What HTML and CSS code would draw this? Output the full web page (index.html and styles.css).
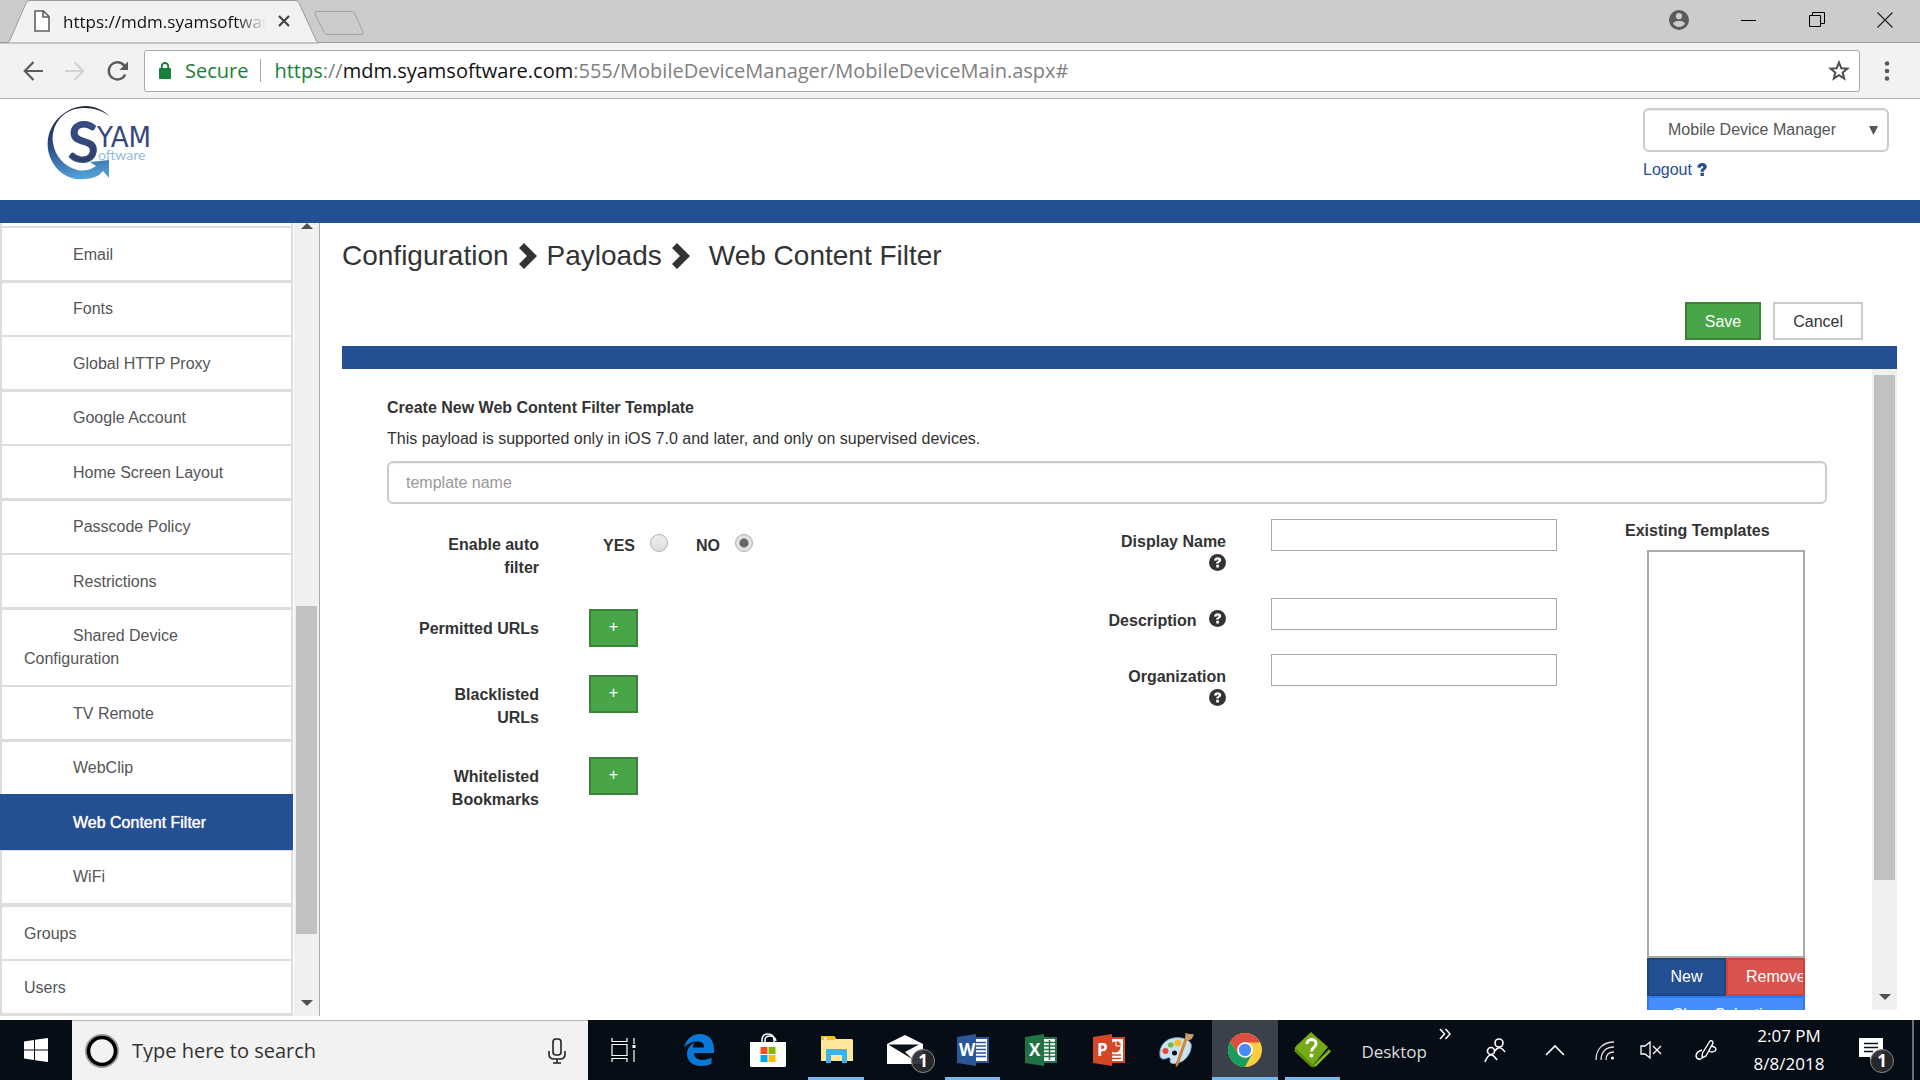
FILE: index.html
```html
<!DOCTYPE html>
<html lang="en">
<head>
<meta charset="utf-8">
<title>Mobile Device Manager - Web Content Filter</title>
<link rel="stylesheet" href="styles.css">
</head>
<body>
<svg width="0" height="0" class="sprite" aria-hidden="true">
  <symbol id="chevron" viewBox="0 0 18 26"><path d="M5 0 18 13 5 26 0 21 8 13 0 5z"/></symbol>
  <symbol id="help" viewBox="0 0 17 17"><circle cx="8.500" cy="8.500" r="8.500"/><path d="M5 6.500C5.200 4 6.800 3.300 8.700 3.300c2 0 3.500 1 3.500 2.700 0 2.200-2.400 2-2.400 3.600H7.200c0-2.300 2.300-2 2.300-3.300 0-1.100-1.900-1-2 .5zM7.200 10.800h2.700v2.700H7.200z" fill="#fff"/></symbol>
  <symbol id="up" viewBox="0 0 12 6"><path d="M0 6 6 0l6 6z"/></symbol>
  <symbol id="down" viewBox="0 0 12 6"><path d="M0 0h12L6 6z"/></symbol>
</svg>

<header class="browser">
  <div class="tabstrip">
    <svg class="tab-shape" width="370" height="43" viewBox="0 0 370 43" aria-hidden="true">
      <path d="M0 43V42.500H7Q9 42.500 10 40L26 3Q27 .5 30 .5H295Q298 .5 299 3L316 40Q317 42.500 319 42.500L319 43z" fill="#f2f2f2" stroke="#999"/>
      <path d="M317 11.500H351Q354 11.500 355 14L363 32Q364 34.500 361 34.500H328Q325 34.500 324 32L315 14Q314 11.500 317 11.500z" fill="#ccc" stroke="#a3a3a3"/>
    </svg>
    <div class="tab">
      <svg width="16" height="22" viewBox="0 0 16 22" aria-hidden="true"><path d="M1 1h8.500L15 6.500V21H1zM9 1v6h6" fill="#fff" stroke="#5f5f5f" stroke-width="1.600"/></svg>
      <span class="tab-title">https://mdm.syamsoftware.com</span>
      <button class="plain" aria-label="Close tab"><svg width="12" height="12" viewBox="0 0 12 12"><path d="M1 1l10 10M11 1 1 11" stroke="#444" stroke-width="2.200"/></svg></button>
    </div>
    <div class="window-controls">
      <button class="plain" aria-label="Profile"><svg width="20" height="20" viewBox="0 0 20 20"><circle cx="10" cy="10" r="10" fill="#5b5b5b"/><circle cx="10" cy="6.200" r="3.100" fill="#ccc"/><path d="M4 13.500C5 11.500 7.500 11 10 11s5 .5 6 2.500C14.800 15.600 12.500 17 10 17s-4.800-1.400-6-3.500z" fill="#ccc"/></svg></button>
      <button class="plain" aria-label="Minimize"><svg width="16" height="16" viewBox="0 0 16 16"><path d="M0 8.500h15" stroke="#000"/></svg></button>
      <button class="plain" aria-label="Restore"><svg width="16" height="16" viewBox="0 0 16 16"><path d="M.5 3.500h11v11H.5zM3.500 3V.5h12v11H12" fill="none" stroke="#000"/></svg></button>
      <button class="plain" aria-label="Close window"><svg width="16" height="16" viewBox="0 0 16 16"><path d="M.5.500l15 15M15.500.5l-15 15" stroke="#222" stroke-width="1.200"/></svg></button>
    </div>
  </div>
  <div class="toolbar">
    <nav class="history" aria-label="History">
      <button class="plain" aria-label="Back"><svg width="20" height="20" viewBox="0 0 20 20"><path d="M20 10H2M10.500 1 1.800 10l8.700 9" fill="none" stroke="#5a5a5f" stroke-width="2.200"/></svg></button>
      <button class="plain" aria-label="Forward"><svg width="20" height="20" viewBox="0 0 20 20"><path d="M0 10h18M9.500 1l8.700 9-8.700 9" fill="none" stroke="#d3d3d3" stroke-width="2.200"/></svg></button>
      <button class="plain" aria-label="Reload"><svg width="22" height="20" viewBox="0 0 22 20"><path d="M18.200 13.500A8.600 8.600 0 1 1 17.500 5" fill="none" stroke="#5a5a5f" stroke-width="2.400"/><path d="M21 .5V9h-8.500z" fill="#5a5a5f"/></svg></button>
    </nav>
    <div class="omnibox">
      <svg width="12" height="17" viewBox="0 0 12 17" aria-hidden="true"><rect y="6" width="12" height="11" rx="1" fill="#188038"/><path d="M2.800 7V4.200a3.200 3.200 0 0 1 6.400 0V7" fill="none" stroke="#188038" stroke-width="1.900"/></svg>
      <span class="secure">Secure</span>
      <span class="address"><span class="scheme">https</span>://<span class="host">mdm.syamsoftware.com</span>:555/MobileDeviceManager/MobileDeviceMain.aspx#</span>
      <button class="plain" aria-label="Bookmark"><svg width="22" height="21" viewBox="0 0 22 21"><path d="M11 2.500l2.300 5.700 6.100.4-4.700 3.900 1.500 6L11 15.200l-5.200 3.300 1.500-6L2.600 8.600l6.100-.4z" fill="none" stroke="#4d4d4d" stroke-width="2"/></svg></button>
    </div>
    <button class="plain" aria-label="Menu"><svg width="6" height="20" viewBox="0 0 6 20" fill="#5a5a5f"><circle cx="3" cy="2.500" r="2.300"/><circle cx="3" cy="10" r="2.300"/><circle cx="3" cy="17.500" r="2.300"/></svg></button>
  </div>
</header>

<div class="site-header">
  <svg class="logo" width="110" height="78" viewBox="0 0 110 78" role="img" aria-label="SYAM Software">
    <defs>
      <linearGradient id="swoosh" x1="0.500" y1="0" x2="0.600" y2="1"><stop offset="0" stop-color="#1c2434"/><stop offset="0.500" stop-color="#2c4a86"/><stop offset="1" stop-color="#55a5dd"/></linearGradient>
      <linearGradient id="ink" x1="0" y1="0" x2="0" y2="1"><stop offset="0" stop-color="#40599a"/><stop offset="1" stop-color="#2a3555"/></linearGradient>
    </defs>
    <path d="M64 13C52 0 34-1 20 8 4 18-2 36 4 53 10 69 25 77 38 75Q51 75 57 67L63 74V56L44 58 50 62Q42 68 31 66C18 62 9 52 7 39 5 24 13 11 26 6 39 2 54 4 64 13z" fill="url(#swoosh)"/>
    <text x="22" y="58" class="logo-s">S</text>
    <text x="51" y="43" class="logo-name">YAM</text>
    <text x="52" y="56" class="logo-sub">oftware</text>
  </svg>
  <div class="account">
    <div class="app-select">
      <select aria-label="Application"><option>Mobile Device Manager</option></select>
      <svg width="9" height="9" viewBox="0 0 9 9" aria-hidden="true"><path d="M0 0h9L4.500 9z" fill="#555"/></svg>
    </div>
    <a class="logout" href="#">Logout <svg width="10" height="13" viewBox="0 0 10 13" aria-hidden="true"><path d="M.3 4.500C.4 1.500 2.500 0 5.300 0 8 0 9.800 1.500 9.800 3.700c0 2.700-3 2.800-3 5H3.600c0-3.500 2.600-3.300 2.600-4.800 0-1.300-2.200-1.200-2.400.8zM3.500 9.700h3.400V13H3.500z" fill="#254f93"/></svg></a>
  </div>
</div>
<div class="band"></div>

<div class="workspace">
  <aside class="sidebar">
    <ul class="menu">
      <li><a href="#">Email</a></li>
      <li><a href="#">Fonts</a></li>
      <li><a href="#">Global HTTP Proxy</a></li>
      <li><a href="#">Google Account</a></li>
      <li><a href="#">Home Screen Layout</a></li>
      <li><a href="#">Passcode Policy</a></li>
      <li><a href="#">Restrictions</a></li>
      <li><a href="#">Shared Device Configuration</a></li>
      <li><a href="#">TV Remote</a></li>
      <li class="joined"><a href="#">WebClip</a></li>
      <li class="active"><a href="#">Web Content Filter</a></li>
      <li class="section-end"><a href="#">WiFi</a></li>
      <li class="top even"><a href="#">Groups</a></li>
      <li class="top last"><a href="#">Users</a></li>
    </ul>
    <div class="scrollbar side-scroll">
      <svg width="12" height="6"><use href="#up"/></svg>
      <div class="before"></div><div class="thumb"></div><div class="after"></div>
      <svg width="12" height="6"><use href="#down"/></svg>
    </div>
  </aside>

  <main class="main">
    <h1 class="crumbs"><span>Configuration</span><svg width="18" height="26"><use href="#chevron"/></svg><span>Payloads</span><svg width="18" height="26"><use href="#chevron"/></svg><span class="current">Web Content Filter</span></h1>
    <div class="actions">
      <button class="btn green">Save</button>
      <button class="btn">Cancel</button>
    </div>
    <div class="band"></div>
    <div class="panel">
      <form class="form">
        <h2><label for="template">Create New Web Content Filter Template</label></h2>
        <p>This payload is supported only in iOS 7.0 and later, and only on supervised devices.</p>
        <input class="template" id="template" type="text" placeholder="template name">
        <div class="columns">
          <div class="filters">
            <div class="row radios">
              <span class="label" id="auto">Enable auto filter</span>
              <div class="choices" role="radiogroup" aria-labelledby="auto">
                <label>YES <input type="radio" name="auto"></label>
                <label>NO <input type="radio" name="auto" checked></label>
              </div>
            </div>
            <div class="row"><label class="label" for="permitted">Permitted URLs</label><button type="button" id="permitted" class="btn green add">+</button></div>
            <div class="row"><label class="label" for="blacklisted">Blacklisted URLs</label><button type="button" id="blacklisted" class="btn green add">+</button></div>
            <div class="row"><label class="label" for="whitelisted">Whitelisted Bookmarks</label><button type="button" id="whitelisted" class="btn green add">+</button></div>
          </div>
          <div class="details">
            <div class="field"><label for="display">Display Name <svg width="17" height="17"><use href="#help"/></svg></label><input id="display" type="text"></div>
            <div class="field"><label for="description">Description <svg width="17" height="17"><use href="#help"/></svg></label><input id="description" type="text"></div>
            <div class="field"><label for="organization">Organization <svg width="17" height="17"><use href="#help"/></svg></label><input id="organization" type="text"></div>
          </div>
          <div class="templates">
            <label class="heading" for="existing">Existing Templates</label>
            <div class="picker">
              <select id="existing" size="10"></select>
              <div class="pair">
                <button type="button" class="btn blue">New</button>
                <button type="button" class="btn red">Remove</button>
              </div>
              <button type="button" class="btn sky">Clear Selection</button>
            </div>
          </div>
        </div>
      </form>
      <div class="scrollbar panel-scroll">
        <div class="before"></div><div class="thumb"></div><div class="after"></div>
        <svg width="12" height="6"><use href="#down"/></svg>
      </div>
    </div>
  </main>
</div>

<footer class="taskbar">
  <button class="plain start" aria-label="Start"><svg width="24" height="24" viewBox="0 0 24 24" fill="#fff"><path d="M0 3.500 10 2v9.400H0zM11 1.800 24 0v11.400H11zM0 12.500h10V22L0 20.500zM11 12.500h13V24L11 22.200z"/></svg></button>
  <div class="search">
    <svg width="34" height="34" viewBox="0 0 34 34" aria-hidden="true"><circle cx="17" cy="17" r="16" fill="none" stroke="#999" stroke-width="2"/><circle cx="17" cy="17" r="13.500" fill="none" stroke="#000" stroke-width="3.600"/></svg>
    <input type="text" placeholder="Type here to search" aria-label="Search">
    <svg width="18" height="26" viewBox="0 0 18 26" fill="none" stroke="#222" stroke-width="1.600" aria-hidden="true"><rect x="5" y="1" width="8" height="16" rx="3"/><path d="M1 13v3q0 5 5 5h6q5 0 5-5v-3M9 21v4M5 25h8"/></svg>
  </div>
  <nav class="apps" aria-label="Taskbar applications">
    <button class="plain" aria-label="Task View"><svg width="26" height="24" viewBox="0 0 26 24" fill="none" stroke="#fff" stroke-width="1.200"><path d="M1 0v3.500h15V0M1 24v-3.500h15V24M1 6.500h15v11H1zM23 0v6M23 12v12"/><path d="M21.500 7h3v3h-3z" fill="#fff" stroke="none"/></svg></button>
    <button class="plain" aria-label="Edge"><svg width="30" height="32" viewBox="0 0 30 32"><path d="M0 14C2 5 8 0 16 0c9 0 14 6.500 14 15v4H10c.3 5 4 7 8.500 7 3.500 0 6.500-1 9-2.500v6.300c-3 1.500-6.500 2.200-10.500 2.200C8.500 32 3 27 3 20c0-5.500 3.300-9.300 8-11.500-1.300 1.500-2 3.200-2 5H20c.3-4-2-6-6.500-6C7.500 7.500 3 10 0 14z" fill="#0a78d7"/></svg></button>
    <button class="plain" aria-label="Store"><svg width="36" height="34" viewBox="0 0 36 34"><path d="M12 10V7q0-6 6-6t6 6v3M15 10V7q0-4 5-4t6 5" fill="none" stroke="#fff" stroke-width="1.500"/><path d="M0 9h36v24l-1 1H1l-1-1z" fill="#fff"/><path d="M10.500 14h7v7h-7z" fill="#f25022"/><path d="M18.500 14h7v7h-7z" fill="#7fba00"/><path d="M10.500 22h7v7h-7z" fill="#00a4ef"/><path d="M18.500 22h7v7h-7z" fill="#ffb900"/></svg></button>
    <button class="plain running" aria-label="File Explorer"><svg width="32" height="28" viewBox="0 0 32 28"><path d="M0 0h13l2 3h16l1 1v21H0z" fill="#ffe699"/><path d="M0 0h13l2 2-2 2H0z" fill="#f8c020"/><path d="M3 1.500h3v2H3z" fill="#fff"/><path d="M5 14q0-1 1-1h19q1 0 1 1v13h-5v-8H10v8H5z" fill="#3db2e8"/><path d="M10 19h11v6H10z" fill="#ffe699"/></svg></button>
    <button class="plain" aria-label="Mail, 1 unread"><svg width="36" height="30" viewBox="0 0 36 30"><path d="M0 9 18 0l18 9v20H0z" fill="#fff"/><path d="M2 9.500h30L18 17l8 7.500L2 10z" fill="#0a111b"/></svg><span class="badge">1</span></button>
    <button class="plain running" aria-label="Word"><svg width="32" height="32" viewBox="0 0 32 32"><path d="M17 4h14v24H17z" fill="#fff" stroke="#2b579a" stroke-width="2"/><path d="M19 8.500h10M19 12h10M19 15.500h10M19 19h10M19 22.500h10" stroke="#2b579a" stroke-width="1.500"/><path d="M0 3 19 0v32L0 29z" fill="#2b579a"/><text x="2" y="22" class="office">W</text></svg></button>
    <button class="plain" aria-label="Excel"><svg width="32" height="32" viewBox="0 0 32 32"><path d="M17 4h14v24H17z" fill="#fff" stroke="#217346" stroke-width="2"/><path d="M18 8.500h12M18 12h12M18 15.500h12M18 19h12M18 22.500h12M24.500 6v20" stroke="#217346" stroke-width="1.500"/><path d="M0 3 19 0v32L0 29z" fill="#217346"/><text x="4" y="22" class="office">X</text></svg></button>
    <button class="plain" aria-label="PowerPoint"><svg width="32" height="32" viewBox="0 0 32 32"><path d="M17 4h14v24H17z" fill="#fff" stroke="#d24726" stroke-width="2"/><circle cx="22" cy="13" r="5.500" fill="#d24726"/><path d="M23 12V6.500a6 6 0 0 1 5.500 5.500z" fill="#d24726" stroke="#fff"/><path d="M19 21h9M19 24.500h9" stroke="#d24726" stroke-width="1.500"/><path d="M0 3 19 0v32L0 29z" fill="#d24726"/><text x="4" y="22" class="office">P</text></svg></button>
    <button class="plain" aria-label="Paint"><svg width="36" height="36" viewBox="0 0 36 36"><path d="M15 6C6 7 0 15 1 23c0 4 4 5 7 3 3-1 4 0 3 3 0 4 9 3 14-1 5-4 8-11 7-16-2-5-10-7-17-6z" fill="#c9e2f3" stroke="#7fb0d5"/><circle cx="15.500" cy="21" r="2.500" fill="#0a111b"/><circle cx="6.500" cy="19" r="3" fill="#e3493b"/><rect x="9" y="10.500" width="5.500" height="5" rx="2" fill="#6cba4a"/><circle cx="19" cy="11" r="3.500" fill="#fbb829"/><path d="M28 7 19 33l-2 2 0-3L26 7z" fill="#e58a2c" stroke="#a65c18" stroke-width=".6"/><path d="M26 7c0-3 1-5 0-6 3 0 5 2 9 1-1 3-2 7-7 6z" fill="#c99a6b"/></svg></button>
    <button class="plain running current" aria-label="Chrome"><svg width="34" height="34" viewBox="0 0 34 34"><circle cx="17" cy="17" r="17" fill="#ffcd42"/><path d="M2.300 8.500A17 17 0 0 1 31.700 8.500L31.500 9.500H17L10 21z" fill="#dc4e41"/><path d="M2.300 8.500A17 17 0 0 0 17 34l7-13-7 2-7-2z" fill="#179e5f"/><circle cx="17" cy="17" r="7.800" fill="#fff"/><circle cx="17" cy="17" r="6.200" fill="#4b8bf5"/></svg></button>
    <button class="plain running" aria-label="Help"><svg width="36" height="36" viewBox="0 0 36 36"><path d="M16 0 33 15 19 32Q17 34 15 32L0 18Q-1 16 1 14z" fill="#74ab17"/><path d="M0 18 15 32Q17 35 20 33L35 18" fill="none" stroke="#5a8d0d" stroke-width="3"/><path d="M35 19 20 34" stroke="#8fd018" stroke-width="1.500"/><path d="M12 12c0-6 9-6 9-.5 0 4-4.500 4-4.500 8" fill="none" stroke="#fff" stroke-width="3"/><circle cx="16.500" cy="23.500" r="2" fill="#fff"/></svg></button>
  </nav>
  <div class="tray">
    <span class="desktop">Desktop</span>
    <button class="plain more" aria-label="More"><svg width="12" height="10" viewBox="0 0 12 10"><path d="M1 0l4.500 5L1 10M6.500 0 11 5l-4.500 5" fill="none" stroke="#fff" stroke-width="1.500"/></svg></button>
    <button class="plain people" aria-label="People"><svg width="22" height="24" viewBox="0 0 22 24" fill="none" stroke="#fff" stroke-width="1.600"><circle cx="15" cy="5" r="4"/><circle cx="7" cy="13" r="3.500"/><path d="M11 13q4-7 10 1M1 24q5-13 12-2"/></svg></button>
    <button class="plain caret" aria-label="Show hidden icons"><svg width="18" height="10" viewBox="0 0 18 10"><path d="M0 10l9-9 9 9" fill="none" stroke="#fff" stroke-width="1.600"/></svg></button>
    <button class="plain wifi" aria-label="Network"><svg width="20" height="19" viewBox="0 0 20 19" fill="none" stroke="#ddd" stroke-width="1.300"><path d="M1 19C1 8 8 1 19 1M6 19C6 11 11 6 19 6M11 19c0-5 3-8 8-8"/><circle cx="17.500" cy="17" r="1.500" fill="#fff" stroke="none"/></svg></button>
    <button class="plain sound" aria-label="Volume muted"><svg width="22" height="18" viewBox="0 0 22 18" fill="none" stroke="#fff" stroke-width="1.300"><path d="M1 5h4l5-4v16l-5-4H1zM13 5l8 8M21 5l-8 8"/></svg></button>
    <button class="plain pen" aria-label="Pen"><svg width="22" height="20" viewBox="0 0 22 20" fill="none" stroke="#fff" stroke-width="1.400"><path d="M7 18 7.500 13 15 1q3-1 3 2l-7 13zM7 10Q1 12 1 16q1 4 5 3M17 6q6 2 3 5-3 2-6 0"/></svg></button>
    <div class="clock"><time>2:07 PM</time><time datetime="2018-08-08">8/8/2018</time></div>
    <button class="plain notes" aria-label="1 notification"><svg width="24" height="24" viewBox="0 0 24 24"><path d="M0 0h24v19H14l-3 4v-4H0z" fill="#fff"/><path d="M5 5.500h14M5 9.500h14M5 13.500h9" stroke="#0a111b" stroke-width="1.300"/></svg><span class="badge">1</span></button>
  </div>
</footer>
</body>
</html>
```
FILE: styles.css
```css
* { box-sizing: border-box; }
body {
  margin: 0;
  height: 100vh;
  display: flex;
  flex-direction: column;
  overflow: hidden;
  background: #fff;
  color: #333;
  font: 16px/23px "Liberation Sans", Arial, sans-serif;
}
button, input, select { font: inherit; color: inherit; margin: 0; }
svg { display: block; flex: none; overflow: visible; }
a { color: inherit; text-decoration: none; }
.sprite { position: absolute; }
.plain { border: 0; padding: 0; background: none; display: flex; align-items: center; justify-content: center; flex: none; }
.band { height: 23px; background: #254f93; flex: none; }

/* Browser frame */
.browser { flex: none; font-family: "Open Sans", "Noto Sans", sans-serif; }
.tabstrip { position: relative; height: 43px; background: #ccc; border-bottom: 1px solid #999; display: flex; justify-content: space-between; }
.tab-shape { position: absolute; left: 0; top: 0; }
.tab { position: relative; display: flex; align-items: center; padding-left: 34px; width: 290px; color: #111; font-size: 17px; }
.tab-title { flex: 1; margin: 0 12px 0 13px; overflow: hidden; white-space: nowrap; -webkit-mask-image: linear-gradient(to right, #000 85%, transparent); mask-image: linear-gradient(to right, #000 85%, transparent); }
.window-controls { display: flex; align-items: center; gap: 52px; padding: 0 27px 2px 0; }
.toolbar { height: 56px; background: #f2f2f2; border-bottom: 1px solid #b0b0b0; display: flex; align-items: center; padding: 0 30px 0 23px; gap: 15px; }
.toolbar > .plain { margin-left: 9px; }
.history { display: flex; gap: 22px; }
.omnibox { flex: 1; height: 42px; border: 1px solid #a9a9a9; border-radius: 3px; background: #fff; display: flex; align-items: center; padding: 0 9px 0 14px; font-size: 20px; color: #808080; white-space: nowrap; }
.secure { color: #188038; margin: 0 12px 0 14px; }
.address { flex: 1; border-left: 1px solid #aaa; padding-left: 13px; }
.scheme { color: #188038; }
.host { color: #111; }

/* Site header */
.site-header { flex: none; display: flex; justify-content: space-between; align-items: flex-start; padding: 5px 31px 18px 46px; height: 101px; }
.logo-s { font: 56px "Lato", sans-serif; fill: url(#ink); stroke: #33487c; stroke-width: 2px; }
.logo-name { font: 29px "DejaVu Sans Condensed", "DejaVu Sans", sans-serif; fill: #34487b; }
.logo-sub { font: 14px "Lato", sans-serif; fill: #93bce0; }
.account { width: 246px; padding-top: 4px; }
.app-select { display: flex; align-items: center; border: 2px solid #ccc; border-radius: 6px; height: 44px; padding: 0 9px 0 23px; color: #555; box-shadow: inset 0 1px 1px #eee; }
.app-select select { flex: 1; border: 0; padding: 0; background: none; appearance: none; outline: 0; margin-top: -2px; }
.logout { display: flex; align-items: center; gap: 5px; color: #254f93; margin-top: 6px; }

/* Workspace */
.workspace { flex: 1; min-height: 0; display: flex; padding-bottom: 4px; }
.sidebar { width: 320px; flex: none; display: flex; gap: 1px; border-right: 1px solid #aaa; overflow: hidden; }
.menu { list-style: none; margin: 0; padding: 3px 0 0; flex: 1; border: solid #ddd; border-width: 0 2px; color: #555; }
.menu li { border-bottom: 2px solid #ddd; }
.menu li:nth-child(odd) { border-bottom-width: 3px; }
.menu li:first-child { border-top: 2px solid #ddd; }
.menu a { display: block; padding: 14px 22px 15px; text-indent: 49px; }
.menu li:nth-child(odd) a, .menu .last a { padding: 15px 22px 14px; }
.menu .joined { border-bottom: 0; }
.menu li.active { margin: 0 -2px; padding: 2px; background: #254f93; color: #fff; border-bottom: 0; }
.menu .active a { text-shadow: 0 0 1px #fff; }
.menu li.section-end { border-top: 1px solid #ddd; border-bottom-width: 4px; }
.menu .top a { text-indent: 0; }
.menu li.even { border-bottom-width: 2px; }
.menu li.last { border-bottom-width: 3px; }

.scrollbar { width: 25px; flex: none; background: #f0f0f0; display: flex; flex-direction: column; align-items: center; padding-bottom: 10px; fill: #505050; }
.thumb { width: 21px; background: #c1c1c1; }
.side-scroll .before { flex: 377; }
.side-scroll .thumb { flex: 328; }
.side-scroll .after { flex: 66; }
.panel-scroll { padding-top: 6px; }
.panel-scroll .thumb { flex: 505; }
.panel-scroll .after { flex: 114; }

.main { flex: 1; min-width: 0; display: flex; flex-direction: column; padding: 0 23px 0 22px; margin-bottom: 6px; }
.crumbs { display: flex; align-items: center; gap: 10px; margin: 15px 0 0; font-size: 28px; line-height: 36px; font-weight: normal; fill: #333; }
.crumbs .current { margin-left: 9px; }
.actions { display: flex; justify-content: flex-end; gap: 12px; padding: 28px 34px 6px 0; }
.btn { height: 38px; border: 2px solid #ccc; background: #fff; padding: 0 18px; font-weight: normal; white-space: nowrap; overflow: hidden; flex: none; }
.green { background: #48a548; border-color: #3c8339; color: #fff; }
.blue { background: #254f93; border-color: #1f4580; color: #fff; }
.red { background: #d9534f; border-color: #d43f3a; color: #fff; text-align: left; }
.sky { background: #478cff; border-color: #2f79f0; color: #fff; }

.panel { flex: 1; min-height: 0; display: flex; overflow: hidden; }
.form { flex: 1; padding: 27px 45px 0; overflow: hidden; }
.form h2 { margin: 0; font-size: 16px; line-height: 23px; }
.form p { margin: 8px 0 11px; }
.template { display: block; width: 100%; height: 43px; border: 2px solid #ccc; border-radius: 6px; padding: 0 17px; box-shadow: inset 0 1px 1px #eee; }
.template::placeholder { color: #999; }
.columns { display: flex; padding-top: 15px; font-weight: bold; }
.filters { flex: 1; display: flex; flex-direction: column; gap: 28px; padding-top: 6px; }
.row { display: flex; gap: 50px; min-height: 38px; }
.row:nth-child(n+3) { min-height: 54px; }
.row.radios { min-height: 56px; }
.label { width: 152px; padding: 8px 0 0 30px; text-align: right; }
.label[for="permitted"] { padding-left: 0; }
.choices { display: flex; gap: 28px; align-items: flex-start; padding: 9px 0 0 14px; }
.choices label { display: flex; gap: 15px; }
.choices input { appearance: none; width: 18px; height: 18px; border: 1px solid #b0b0b0; border-radius: 50%; background: linear-gradient(#eee, #dcdcdc); }
.choices input:checked { background: radial-gradient(circle, #666 0 4px, #e3e3e3 5px); }
.add { width: 49px; padding: 0 0 3px; }
.details { width: 456px; display: flex; flex-direction: column; gap: 22px; }
.field { display: flex; gap: 45px; align-items: flex-start; }
.field label { width: 125px; padding-top: 11px; text-align: right; }
.field svg { display: inline-block; margin-left: 8px; vertical-align: -1px; fill: #333; }
.field input { flex: 1; min-width: 0; height: 32px; border: 1px solid #a9a9a9; padding: 0 6px; }
.templates { width: 202px; margin-left: 68px; }
.heading { display: block; margin-bottom: 8px; }
.picker { width: 158px; margin-left: 22px; font-weight: normal; }
.picker .btn { padding-bottom: 2px; }
.picker select { display: block; width: 100%; height: 408px; border: 2px solid #aaa; border-radius: 0; background: #fff; }
.pair { display: flex; }
.pair .btn { flex: 1; min-width: 0; }
.sky { display: block; width: 100%; }

/* Taskbar */
.taskbar { flex: none; height: 60px; background: #060d16; display: flex; color: #fff; font-family: "Open Sans", "Noto Sans", sans-serif; border-right: 6px solid #060d16; box-shadow: inset -2px 0 #6b7078; }
.start { width: 72px; }
.search { width: 516px; background: #f2f2f2; border-top: 1px solid #b5b5b5; display: flex; align-items: center; padding: 0 22px 0 13px; gap: 13px; color: #222; }
.search input { flex: 1; border: 0; padding: 0; background: none; font-size: 20px; }
.search input::placeholder { color: #333; }
.apps { display: flex; }
.apps .plain { position: relative; width: 68px; }
.apps .plain:nth-child(-n+4) { width: 69px; }
.apps .plain:first-child { width: 76px; padding-right: 4px; }
.apps .running::after { content: ""; position: absolute; left: 6px; right: 7px; bottom: 0; height: 3px; background: #76b9ed; }
.apps .current { background: #3a414b; background-clip: content-box; padding: 0 1px; }
.apps .current::after { left: 1px; right: 1px; }
.badge { position: absolute; left: 40px; top: 29px; width: 24px; height: 24px; border: 1px solid #888; border-radius: 50%; background: rgba(40, 42, 45, .93); color: #fff; font: bold 17px/22px "Open Sans", sans-serif; text-align: center; }
.office { font: bold 17px "Open Sans", sans-serif; fill: #fff; }
.tray { flex: 1; display: flex; align-items: center; justify-content: flex-end; padding-right: 31px; }
.desktop { font-size: 17px; color: #ddd; margin-right: 12px; padding-top: 2px; }
.more { align-self: flex-start; margin: 9px 33px 0 0; }
.people { margin-right: 40px; }
.caret { margin-right: 31px; }
.wifi { margin-right: 25px; }
.sound { margin-right: 33px; }
.pen { margin-right: 20px; }
.clock { width: 104px; margin-right: 18px; display: flex; flex-direction: column; font-size: 17px; line-height: 28px; text-align: center; white-space: nowrap; }
.notes { position: relative; }
.notes .badge { left: 11px; top: 11px; }
```
